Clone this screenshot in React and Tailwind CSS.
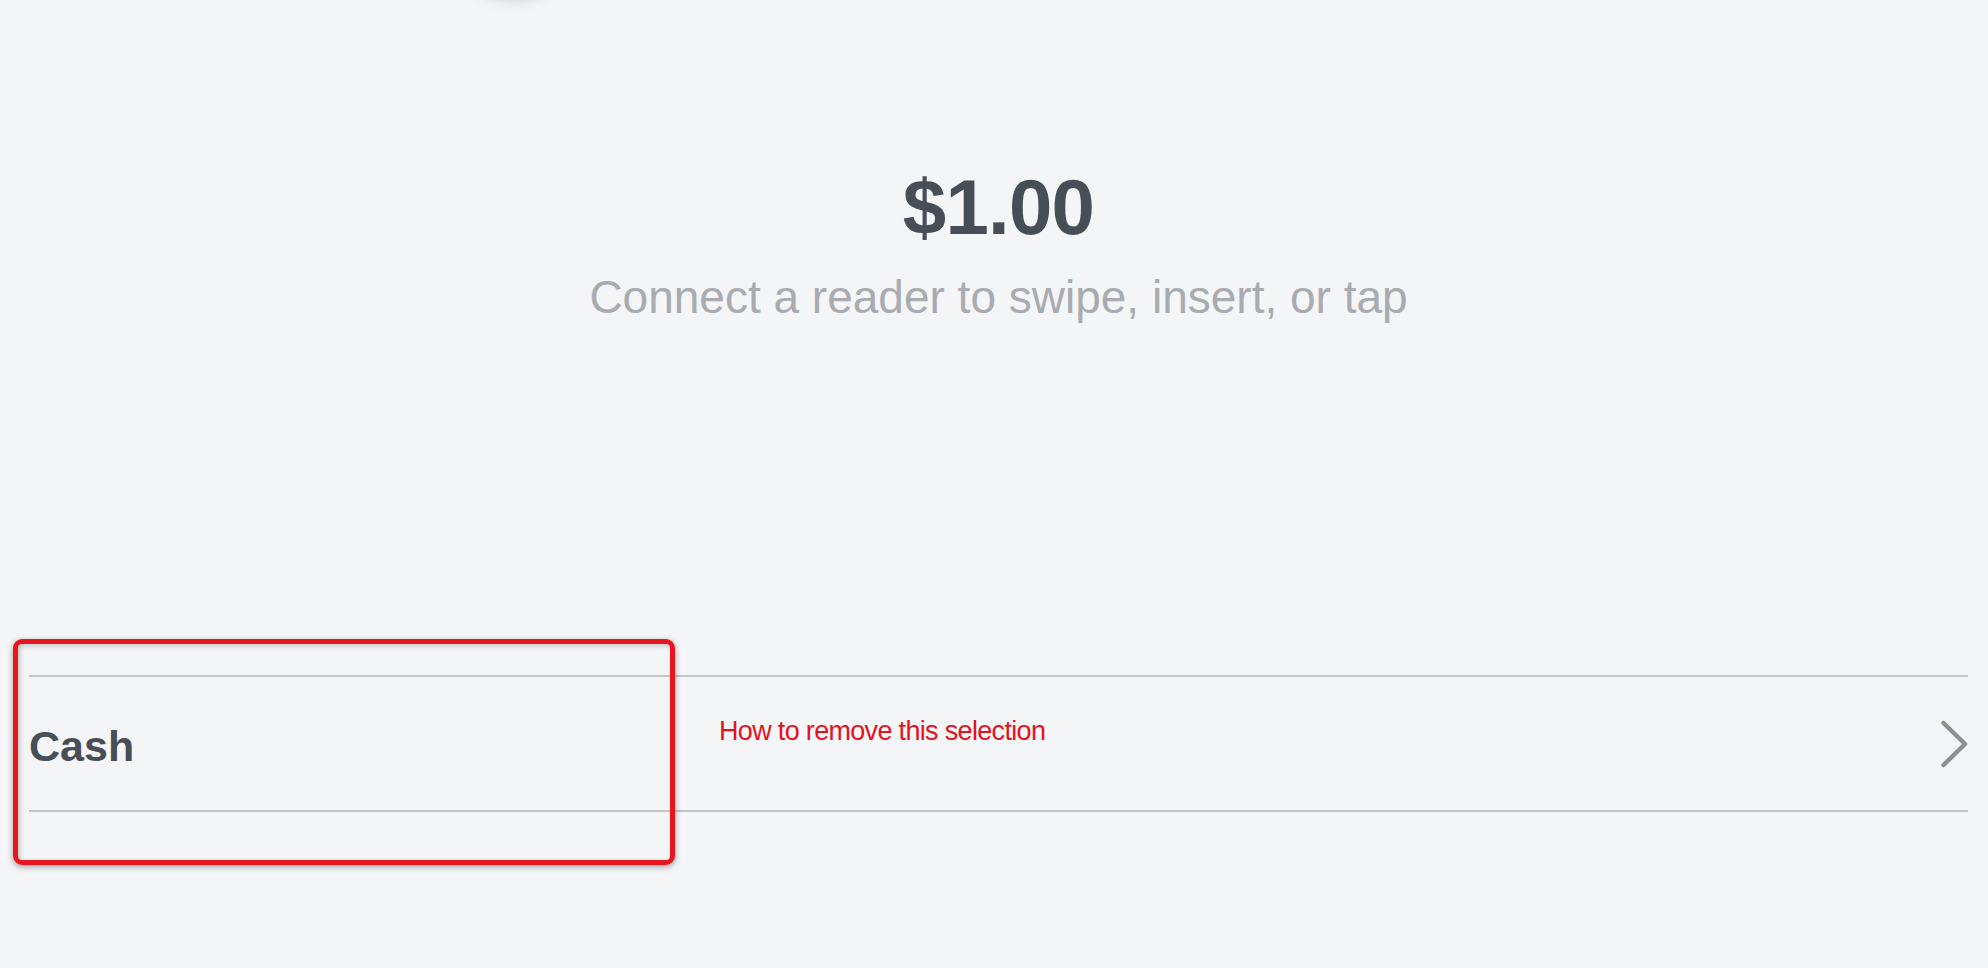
import { useState } from "react";

const Chevron = () => (
  <svg width="28" height="48" viewBox="0 0 28 48" fill="none" className="shrink-0">
    <path d="M3.5 3 L25 24 L3.5 45" stroke="#8c9095" strokeWidth="4.5" strokeLinecap="round" strokeLinejoin="round" />
  </svg>
);

const PaymentRow = ({ label, note }) => {
  return (
    <div className="flex h-[137px] items-start border-y-2 border-[#c2c4c8]">
      <div className="flex h-full w-[690px] items-center">
        <span className="mt-[5px] text-[43px] font-bold leading-none text-[#474e56]">{label}</span>
      </div>
      <span className="mt-[41px] text-[27px] leading-none tracking-[-0.025em] text-[#e3131e]">{note}</span>
      <div className="ml-auto flex h-full items-center">
        <Chevron />
      </div>
    </div>
  );
};

export default function App() {
  const [amount] = useState("$1.00");

  return (
    <div className="relative h-[968px] w-full overflow-hidden bg-[#f4f5f7] font-['Liberation_Sans',Arial,sans-serif]">
      {/* shadow of the round button cut off at the top */}
      <div className="absolute left-[453px] top-[-128px] h-[120px] w-[120px] rounded-full bg-[#f4f5f7] shadow-[0_6px_16px_rgba(0,0,0,0.22)]"></div>

      <div className="flex flex-col pl-[29px] pr-[20px] pt-[168px]">
        <div className="text-center text-[78px] font-bold leading-none tracking-[-0.01em] text-[#474e56]">{amount}</div>
        <div className="mt-[28px] text-center text-[46px] leading-none text-[#a8abaf]">
          Connect a reader to swipe, insert, or tap
        </div>
        <div className="mt-[355px]">
          <PaymentRow label="Cash" note="How to remove this selection" />
        </div>
      </div>

      {/* annotation box */}
      <div className="absolute left-[13px] top-[639px] h-[226px] w-[662px] rounded-[9px] border-[5px] border-[#e8141f] shadow-[0_2px_6px_rgba(0,0,0,0.35),inset_2px_2px_5px_rgba(0,0,0,0.2)]"></div>
    </div>
  );
}
